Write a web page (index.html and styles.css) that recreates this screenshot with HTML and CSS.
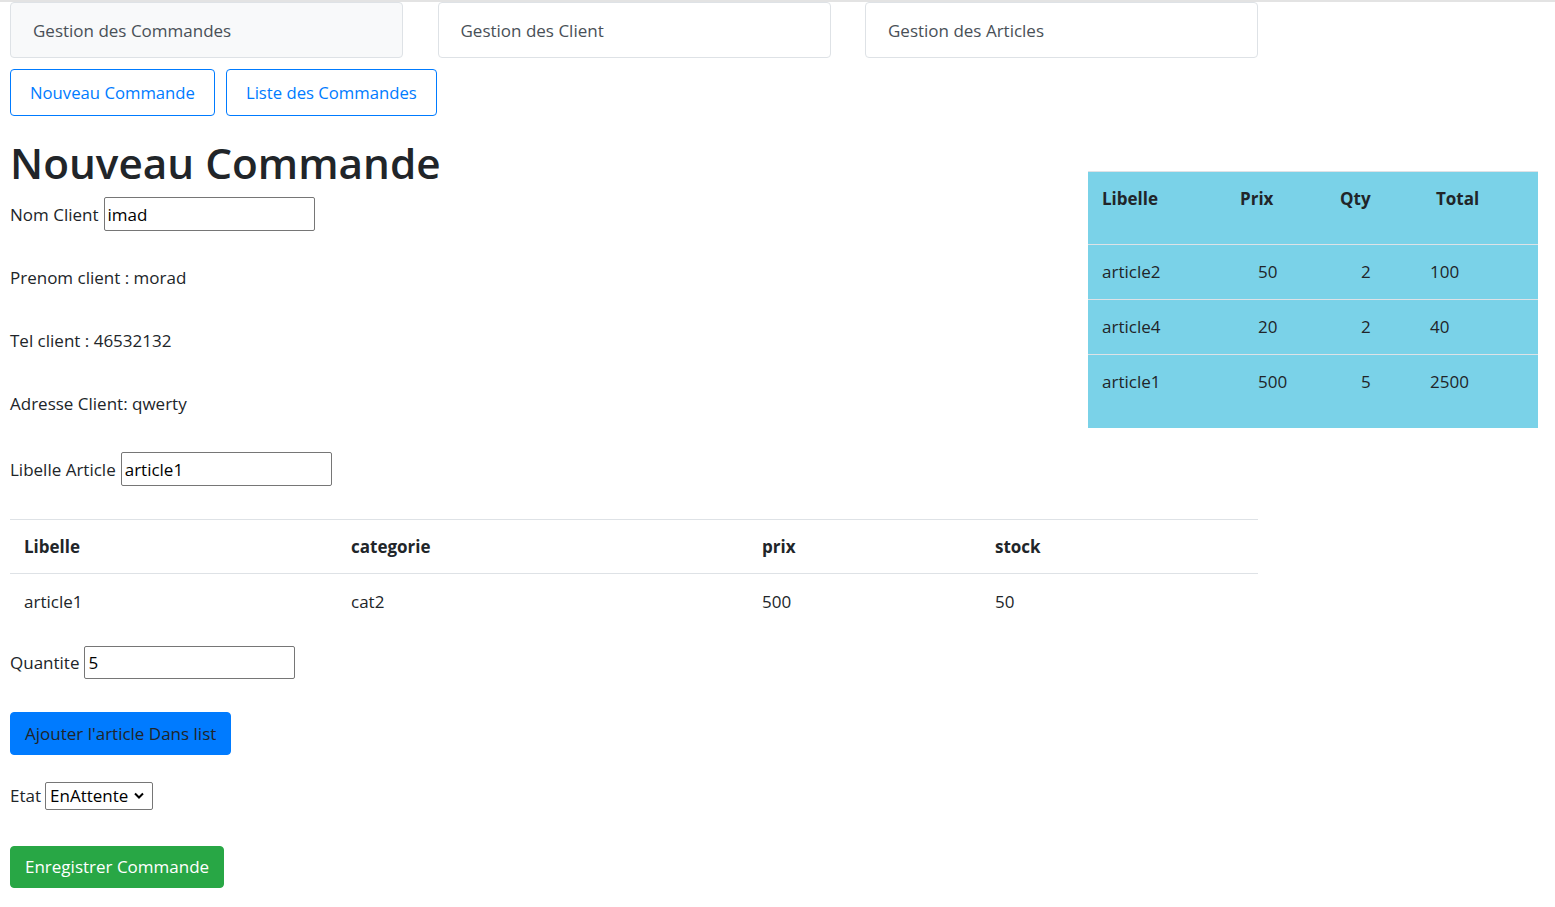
FILE: index.html
```html
<!DOCTYPE html>
<html lang="fr">
<head>
<meta charset="utf-8">
<title>Nouveau Commande</title>
<link rel="stylesheet" href="styles.css">
</head>
<body>
<div class="topline"></div>
<nav class="tabs">
  <a class="tab active">Gestion des Commandes</a>
  <a class="tab">Gestion des Client</a>
  <a class="tab">Gestion des Articles</a>
</nav>
<div class="actions">
  <a class="btn btn-outline">Nouveau Commande</a>
  <a class="btn btn-outline">Liste des Commandes</a>
</div>
<main class="content">
  <table class="cart">
    <thead>
      <tr><th class="c1">Libelle</th><th class="c2">Prix</th><th class="c3">Qty</th><th class="c4">Total</th></tr>
    </thead>
    <tbody>
      <tr><td class="c1">article2</td><td class="c2">50</td><td class="c3">2</td><td class="c4">100</td></tr>
      <tr><td class="c1">article4</td><td class="c2">20</td><td class="c3">2</td><td class="c4">40</td></tr>
      <tr class="last"><td class="c1">article1</td><td class="c2">500</td><td class="c3">5</td><td class="c4">2500</td></tr>
    </tbody>
  </table>
  <h1 class="title">Nouveau Commande</h1>
  <div class="field f-nom"><label>Nom Client</label><input class="inp" type="text" value="imad"></div>
  <div class="field f-info">Prenom client : morad</div>
  <div class="field f-info">Tel client : 46532132</div>
  <div class="field f-info">Adresse Client: qwerty</div>
  <div class="field f-lib"><label>Libelle Article</label><input class="inp" type="text" value="article1"></div>
  <table class="articles">
    <thead>
      <tr><th class="a1">Libelle</th><th class="a2">categorie</th><th class="a3">prix</th><th class="a4">stock</th></tr>
    </thead>
    <tbody>
      <tr><td>article1</td><td>cat2</td><td>500</td><td>50</td></tr>
    </tbody>
  </table>
  <div class="field f-qte"><label>Quantite</label><input class="inp" type="text" value="5"></div>
  <button class="btn btn-primary">Ajouter l'article Dans list</button>
  <div class="field f-etat"><label>Etat</label>
    <div class="select"><span>EnAttente</span>
      <svg width="10" height="7" viewBox="0 0 10 7"><path d="M1 1.5 L5 5.5 L9 1.5" fill="none" stroke="#000" stroke-width="2"/></svg>
    </div>
  </div>
  <button class="btn btn-success">Enregistrer Commande</button>
</main>
</body>
</html>
```
FILE: styles.css
```css
* { box-sizing: border-box; }
html, body { margin: 0; padding: 0; }
body {
  font-family: "Open Sans", "Noto Sans", sans-serif;
  font-size: 17px;
  color: #212529;
  background: #fff;
  width: 1555px;
}
.topline { height: 2px; background: #e3e3e3; }

.tabs {
  display: grid;
  grid-template-columns: 393px 393px 393px;
  column-gap: 34.5px;
  padding: 0 10px;
  height: 56px;
}
.tab {
  display: flex;
  align-items: center;
  padding-left: 22px;
  border: 1px solid #dee2e6;
  border-radius: 4px;
  color: #495057;
  font-size: 17px;
}
.tab.active { background: #f8f9fa; }

.actions {
  display: flex;
  gap: 11px;
  padding: 11px 10px 0;
}
.btn {
  display: inline-flex;
  align-items: center;
  justify-content: center;
  font-family: inherit;
  font-size: 17px;
  border-radius: 4px;
  cursor: pointer;
}
.btn-outline {
  height: 47px;
  padding: 0 19px;
  border: 1px solid #007bff;
  color: #007bff;
  background: #fff;
  font-size: 16.7px;
}

.content { display: flow-root; padding: 0 10px; }

.cart {
  float: right;
  margin: 55px 7px 0 20px;
  width: 450px;
  border-collapse: collapse;
  background: #7ad2e8;
  table-layout: fixed;
}
.cart th, .cart td {
  border-top: 1px solid #dee2e6;
  height: 55px;
  padding: 0;
  text-align: left;
  vertical-align: top;
  line-height: 54px;
}
.cart th { font-weight: 700; height: 73px; }
.cart tr.last td { height: 73px; }
.cart .c1 { width: 138px; padding-left: 14px; }
.cart .c2 { width: 100px; }
.cart .c3 { width: 90px; }
.cart .c4 { width: 122px; }
.cart th.c2 { padding-left: 14px; }
.cart td.c2 { padding-left: 32px; }
.cart th.c3 { padding-left: 14px; }
.cart td.c3 { padding-left: 35px; }
.cart th.c4 { padding-left: 20px; }
.cart td.c4 { padding-left: 14px; }

.title {
  margin: 17px 0 5px;
  font-size: 42.3px;
  font-weight: 600;
  line-height: 59px;
}
.field {
  display: flex;
  align-items: center;
  gap: 5px;
  height: 34px;
}
.f-nom { margin-top: 0; }
.f-info { margin-top: 29px; }
.f-lib { margin-top: 32px; }
.f-qte { margin-top: 17px; height: 33px; }
.inp {
  width: 211px;
  height: 100%;
  border: 1px solid #767676;
  border-radius: 2px;
  padding: 0 3px;
  font-family: inherit;
  font-size: 17px;
  color: #000;
}
.articles {
  margin-top: 33px;
  width: 1248px;
  border-collapse: collapse;
  table-layout: fixed;
}
.articles th, .articles td {
  text-align: left;
  padding: 0 14px;
  height: 55px;
}
.articles th {
  border-top: 1px solid #dee2e6;
  border-bottom: 1px solid #dee2e6;
  font-weight: 700;
  height: 54px;
}
.articles .a1 { width: 327px; }
.articles .a2 { width: 411px; }
.articles .a3 { width: 233px; }
.articles .a4 { width: 277px; }

.btn-primary {
  margin-top: 33px;
  height: 43px;
  padding: 0 14px;
  border: 1px solid #007bff;
  background: #007bff;
  color: #212529;
}
.f-etat { margin-top: 27px; height: 28px; gap: 4px; }
.select {
  display: flex;
  align-items: center;
  gap: 6px;
  height: 28px;
  padding: 0 8px 0 4px;
  border: 1px solid #767676;
  border-radius: 2px;
  color: #000;
}
.btn-success {
  display: flex;
  margin-top: 36px;
  height: 42px;
  padding: 0 14px;
  border: 1px solid #28a745;
  background: #28a745;
  color: #fff;
}
```
